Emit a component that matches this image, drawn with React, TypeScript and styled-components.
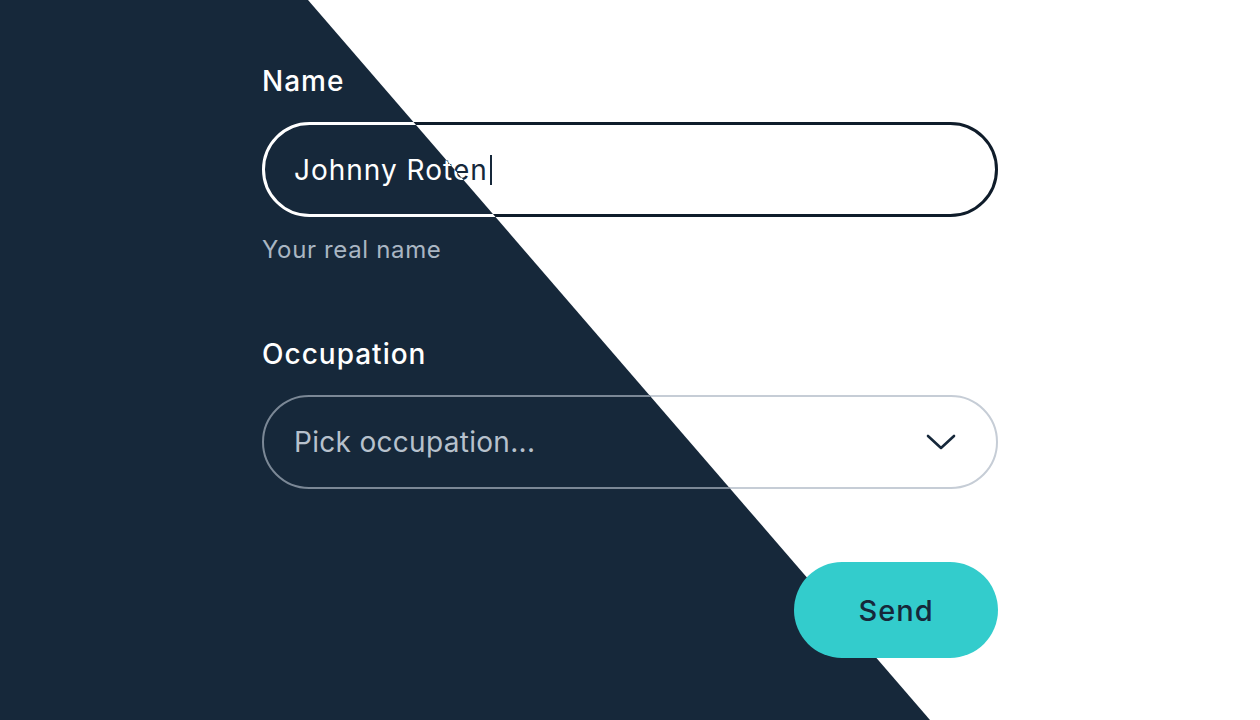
import React from "react";
import styled, { createGlobalStyle, css } from "styled-components";

const NAVY = "#16283a";
const INK = "#0f1c2a";
const TEAL = "#33cccc";

const GlobalStyle = createGlobalStyle`
  html, body {
    margin: 0;
    padding: 0;
  }
  body {
    width: 1260px;
    height: 720px;
    overflow: hidden;
    background: #ffffff;
    font-family: Inter, "Noto Sans", sans-serif;
  }
`;

const Stage = styled.div`
  position: relative;
  width: 1260px;
  height: 720px;
  overflow: hidden;
`;

// the dark copy of the form sits over the light one, cut along the diagonal
const Layer = styled.div<{ $dark?: boolean }>`
  width: 1260px;
  height: 720px;
  box-sizing: border-box;
  padding: 64px 0 0 262px;
  background: ${(p) => (p.$dark ? NAVY : "#ffffff")};
  ${(p) =>
    p.$dark &&
    css`
      position: absolute;
      inset: 0;
      clip-path: polygon(0 0, 308px 0, 930px 720px, 0 720px);
    `}
`;

const Form = styled.div`
  width: 736px;
  display: flex;
  flex-direction: column;
`;

const Label = styled.div<{ $dark?: boolean; $gap?: number }>`
  margin-top: ${(p) => p.$gap || 0}px;
  font-size: 28px;
  line-height: 34px;
  font-weight: 500;
  letter-spacing: 1px;
  color: ${(p) => (p.$dark ? "#ffffff" : NAVY)};
`;

const Field = styled.div<{ $dark?: boolean }>`
  margin-top: 24px;
  height: 95px;
  box-sizing: border-box;
  border: 3px solid ${(p) => (p.$dark ? "#ffffff" : INK)};
  border-radius: 48px;
  padding: 0 29px;
  display: flex;
  align-items: center;
  font-size: 28px;
  font-weight: 400;
  letter-spacing: 1px;
  color: ${(p) => (p.$dark ? "#ffffff" : NAVY)};
  background: ${(p) => (p.$dark ? "transparent" : "#ffffff")};
`;

const Caret = styled.span<{ $dark?: boolean }>`
  display: inline-block;
  width: 2px;
  height: 30px;
  margin-left: 2px;
  background: ${(p) => (p.$dark ? "#ffffff" : NAVY)};
`;

const Helper = styled.div<{ $dark?: boolean }>`
  margin-top: 18px;
  font-size: 24px;
  line-height: 30px;
  letter-spacing: 0.65px;
  color: ${(p) => (p.$dark ? "#a9b6c3" : "#7d8894")};
`;

const Select = styled.div<{ $dark?: boolean }>`
  margin-top: 24px;
  height: 94px;
  box-sizing: border-box;
  border: 2px solid ${(p) => (p.$dark ? "#7b8896" : "#c6cdd6")};
  border-radius: 47px;
  padding: 0 39px 0 30px;
  display: flex;
  align-items: center;
  justify-content: space-between;
  font-size: 28px;
  letter-spacing: 0.3px;
  color: ${(p) => (p.$dark ? "#b7c1cc" : "#8a96a3")};
`;

const Chevron = styled.svg<{ $dark?: boolean }>`
  width: 32px;
  height: 18px;
  color: ${(p) => (p.$dark ? "#ffffff" : NAVY)};
`;

// drawn once, on the light layer, and lifted above the dark one
const SendButton = styled.div<{ $dark?: boolean }>`
  position: relative;
  z-index: 1;
  visibility: ${(p) => (p.$dark ? "hidden" : "visible")};
  margin-top: 73px;
  align-self: flex-end;
  width: 204px;
  height: 96px;
  border-radius: 48px;
  background: ${TEAL};
  display: flex;
  align-items: center;
  justify-content: center;
  font-size: 29px;
  font-weight: 500;
  letter-spacing: 1px;
  color: ${NAVY};
`;

const ContactForm: React.FC<{ dark?: boolean }> = ({ dark }) => (
  <Layer $dark={dark}>
    <Form>
      <Label $dark={dark}>Name</Label>
      <Field $dark={dark}>
        Johnny Roten
        <Caret $dark={dark} />
      </Field>
      <Helper $dark={dark}>Your real name</Helper>

      <Label $dark={dark} $gap={72}>
        Occupation
      </Label>
      <Select $dark={dark}>
        <span>Pick occupation...</span>
        <Chevron $dark={dark} viewBox="0 0 32 18" fill="none">
          <polyline
            points="3,3 16,15 29,3"
            stroke="currentColor"
            strokeWidth="2.6"
            strokeLinecap="round"
            strokeLinejoin="round"
          />
        </Chevron>
      </Select>

      <SendButton $dark={dark}>Send</SendButton>
    </Form>
  </Layer>
);

export default function App() {
  return (
    <>
      <GlobalStyle />
      <Stage>
        <ContactForm />
        <ContactForm dark />
      </Stage>
    </>
  );
}
